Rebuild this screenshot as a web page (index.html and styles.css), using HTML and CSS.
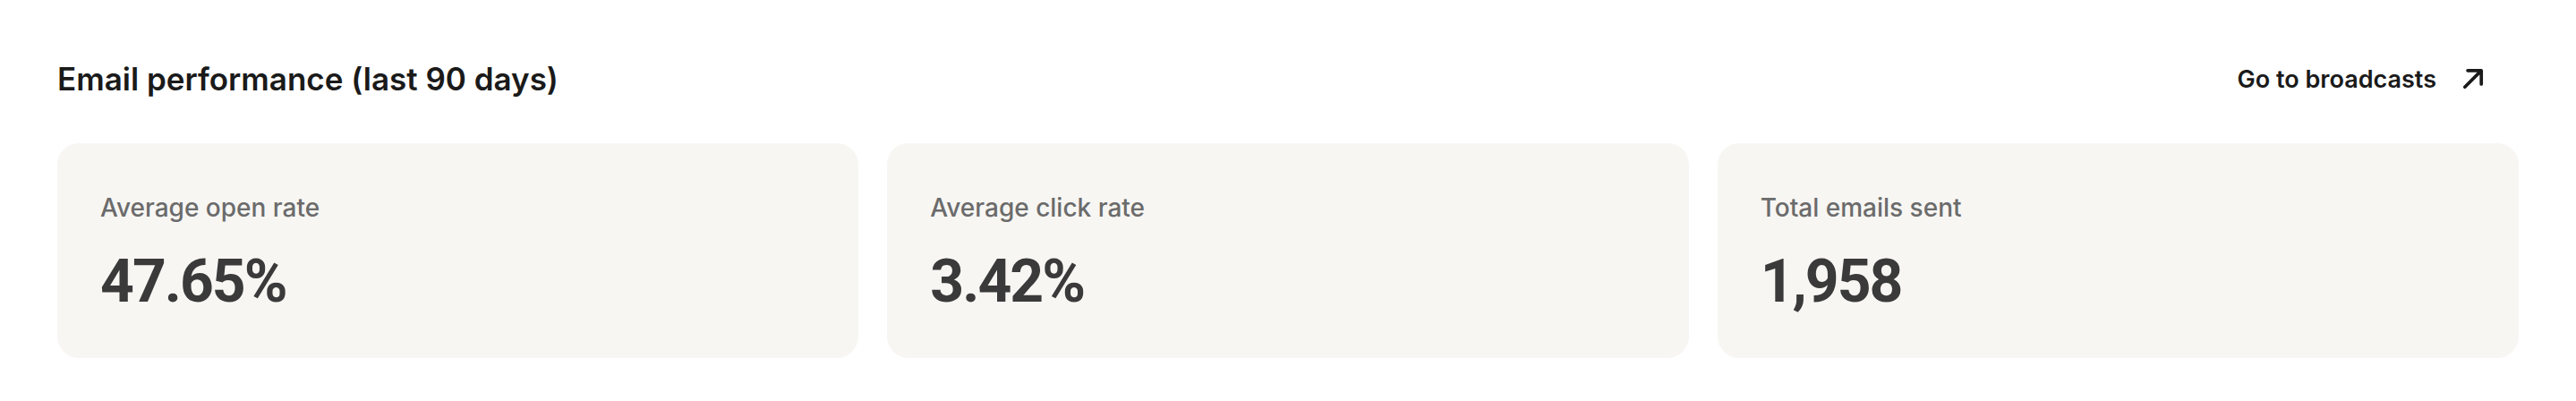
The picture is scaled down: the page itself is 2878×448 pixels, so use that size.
FILE: index.html
```html
<!DOCTYPE html>
<html lang="en">
<head>
<meta charset="utf-8">
<title>Email performance</title>
<link rel="stylesheet" href="styles.css">
</head>
<body>
<section class="perf">
  <header class="perf-head">
    <h2 class="perf-title">Email performance (last 90 days)</h2>
    <a class="perf-link" href="#">
      <span>Go to broadcasts</span>
      <svg class="perf-arrow" viewBox="0 0 24 24" width="24" height="24" aria-hidden="true">
        <path d="M3.5 20.5 L20 4 M6.5 3.5 H20.5 V17.5" fill="none" stroke="currentColor" stroke-width="3.4" stroke-linecap="round" stroke-linejoin="round"/>
      </svg>
    </a>
  </header>
  <div class="stats">
    <div class="stat">
      <div class="stat-label">Average open rate</div>
      <div class="stat-value">47.65%</div>
    </div>
    <div class="stat">
      <div class="stat-label">Average click rate</div>
      <div class="stat-value">3.42%</div>
    </div>
    <div class="stat">
      <div class="stat-label">Total emails sent</div>
      <div class="stat-value">1,958</div>
    </div>
  </div>
</section>
</body>
</html>
```
FILE: styles.css
```css
html, body {
  margin: 0;
  padding: 0;
  background: #ffffff;
}
body {
  font-family: Inter, "Noto Sans", sans-serif;
  color: #1a1a1a;
}
.perf {
  padding: 64px 64px 0 64px;
}
.perf-head {
  display: flex;
  align-items: center;
  justify-content: space-between;
  height: 48px;
  margin-bottom: 48px;
}
.perf-title {
  margin: 0;
  font-size: 35px;
  font-weight: 600;
  color: #1a1a1a;
}
.perf-link {
  display: flex;
  align-items: center;
  gap: 28px;
  margin-right: 38px;
  font-size: 27px;
  font-weight: 600;
  color: #1a1a1a;
  text-decoration: none;
}
.perf-arrow {
  width: 26px;
  height: 26px;
  display: block;
}
.stats {
  display: grid;
  grid-template-columns: repeat(3, 1fr);
  gap: 32px;
}
.stat {
  background: #f7f6f3;
  border-radius: 24px;
  height: 240px;
  box-sizing: border-box;
  padding: 55px 48px 0 48px;
}
.stat-label {
  font-size: 28px;
  font-weight: 500;
  color: #6b6b6b;
  line-height: 34px;
}
.stat-value {
  margin-top: 33px;
  font-family: Roboto, Inter, sans-serif;
  font-size: 66px;
  font-weight: 700;
  letter-spacing: -0.03em;
  line-height: 66px;
  color: #3a3a3a;
}
```
